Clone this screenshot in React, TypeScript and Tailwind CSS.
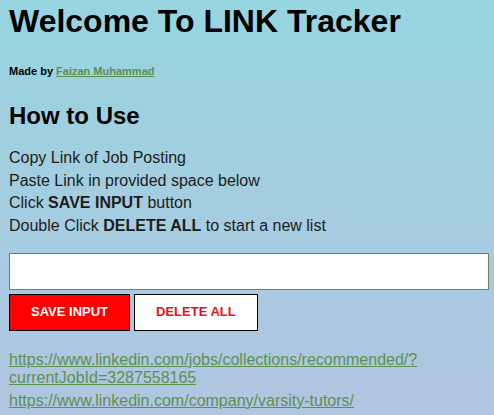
import React from 'react';

const links = [
  'https://www.linkedin.com/jobs/collections/recommended/?currentJobId=3287558165',
  'https://www.linkedin.com/company/varsity-tutors/',
];

const App: React.FC = () => {
  return (
    <div className="min-h-screen bg-gradient-to-b from-[#96d5e0] to-[#b1c5e0] pl-[9px] pr-[5px] pt-[3px] font-['Liberation_Sans',Arial,sans-serif] text-black">
      {/* Header */}
      <h1 className="text-[32px] font-bold leading-[37px]">Welcome To LINK Tracker</h1>
      <h6 className="mt-[25px] text-[11px] font-bold leading-[13px]">
        Made by{' '}
        <a href="#" className="text-[#5c9152] underline">Faizan Muhammad</a>
      </h6>

      {/* Instructions */}
      <h2 className="mt-[24px] text-[24px] font-bold leading-[28px]">How to Use</h2>
      <div className="mt-[17px] text-[16px] leading-[22.67px] text-[#1c1c1c]">
        <p>Copy Link of Job Posting</p>
        <p>Paste Link in provided space below</p>
        <p>Click <b>SAVE INPUT</b> button</p>
        <p>Double Click <b>DELETE ALL</b> to start a new list</p>
      </div>

      {/* Input + buttons */}
      <input
        type="text"
        className="mt-[15px] block h-[37px] w-full border border-[#5f8a50] bg-white px-2 outline-none"
      />
      <div className="mt-[4px] flex gap-[4px]">
        <button className="h-[37px] border border-black bg-[#ff0000] px-[21px] text-[13px] font-bold text-white">
          SAVE INPUT
        </button>
        <button className="h-[37px] border border-black bg-white px-[21px] text-[13px] font-bold text-[#ec1020]">
          DELETE ALL
        </button>
      </div>

      {/* Saved links */}
      <ul className="mt-[20px] flex flex-col gap-[4px] text-[16px] leading-[18.4px]">
        {links.map((l) => (
          <li key={l} className="pr-[60px]">
            <a href={l} className="break-words text-[#5c9152] underline">{l}</a>
          </li>
        ))}
      </ul>
    </div>
  );
};

export default App;
